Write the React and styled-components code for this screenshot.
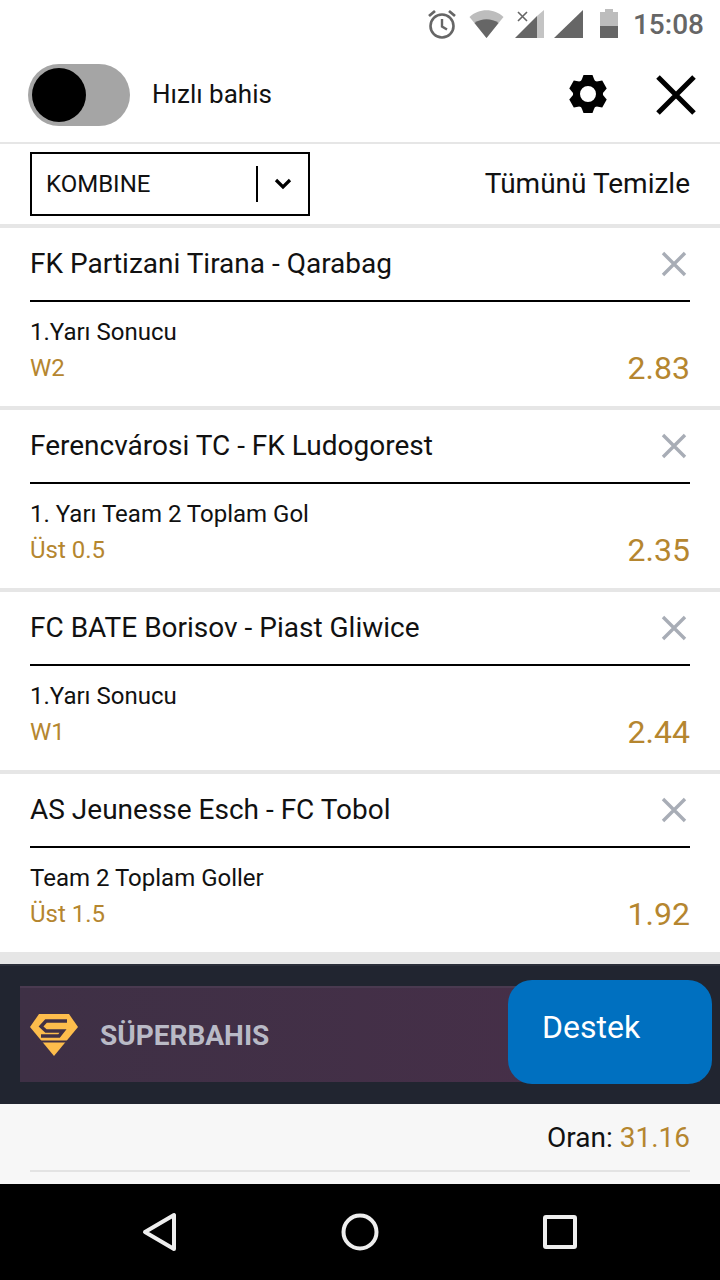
import React from 'react'
import styled, { createGlobalStyle } from 'styled-components'

const GlobalStyle = createGlobalStyle`
  html, body {
    margin: 0;
    padding: 0;
    background: #e6e6e6;
  }
  * {
    box-sizing: border-box;
  }
`

const Page = styled.div`
  position: relative;
  display: flex;
  flex-direction: column;
  width: 720px;
  height: 1280px;
  overflow: hidden;
  font-family: Roboto, 'Liberation Sans', sans-serif;
  color: #111;
`

const StatusBar = styled.div`
  display: flex;
  align-items: center;
  justify-content: flex-end;
  height: 48px;
  padding-right: 16px;
  background: #fff;
  color: #666;
`

const StatusIcon = styled.svg`
  margin-right: ${props => props.$gap}px;
`

const Clock = styled.span`
  font-size: 28px;
  font-weight: 500;
  color: #666;
`

const Header = styled.div`
  display: flex;
  align-items: center;
  height: 96px;
  padding: 0 24px 0 28px;
  background: #fff;
  border-bottom: 2px solid #e6e6e6;
`

const Switch = styled.div`
  display: flex;
  align-items: center;
  width: 102px;
  height: 62px;
  padding-left: 4px;
  border-radius: 31px;
  background: #a5a5a5;
`

const Knob = styled.div`
  width: 54px;
  height: 54px;
  border-radius: 50%;
  background: #000;
`

const SwitchLabel = styled.span`
  flex: 1;
  margin: 0 0 2px 22px;
  font-size: 26px;
`

const Gear = styled.svg`
  margin-bottom: 2px;
`

const CloseButton = styled.svg`
  margin-left: 48px;
`

const Toolbar = styled.div`
  display: flex;
  align-items: center;
  justify-content: space-between;
  height: 80px;
  padding: 0 30px;
  background: #fff;
`

const Select = styled.div`
  display: flex;
  align-items: center;
  width: 280px;
  height: 64px;
  padding-left: 14px;
  border: 2px solid #000;
  font-size: 24px;
`

const SelectValue = styled.span`
  flex: 1;
`

const SelectArrow = styled.div`
  display: flex;
  align-items: center;
  justify-content: center;
  width: 52px;
  height: 36px;
  border-left: 2px solid #000;
`

const ClearAll = styled.span`
  margin-bottom: 2px;
  font-size: 28px;
`

const List = styled.div`
  display: flex;
  flex-direction: column;
  gap: 4px;
  padding-top: 4px;
  background: #e6e6e6;
`

const Card = styled.div`
  height: 178px;
  padding: 0 30px;
  background: #fff;
`

const CardHead = styled.div`
  display: flex;
  align-items: center;
  justify-content: space-between;
  height: 74px;
  padding-bottom: 1px;
  border-bottom: 2px solid #000;
  font-size: 28px;
`

const RemoveIcon = styled.svg`
  width: 26px;
  height: 26px;
  margin-right: 3px;
`

const Market = styled.div`
  margin-top: 15px;
  font-size: 24px;
  line-height: 30px;
`

const Outcome = styled.div`
  display: flex;
  align-items: center;
  justify-content: space-between;
  height: 42px;
  font-size: 24px;
  color: #b5862f;
`

const Odd = styled.span`
  font-size: 32px;
`

const Banner = styled.div`
  height: 140px;
  margin-top: 12px;
  padding: 20px 0 0 20px;
  background: #212530;
  border-top: 2px solid #2b2f3a;
`

const BannerInner = styled.div`
  display: flex;
  align-items: center;
  gap: 22px;
  width: 680px;
  height: 96px;
  padding-left: 10px;
  background: linear-gradient(90deg, #3e3045, #482f49);
  border-top: 2px solid #4a3a50;
`

const BrandName = styled.span`
  font-size: 28px;
  font-weight: 700;
  color: #b9bac6;
`

const Support = styled.div`
  position: absolute;
  left: 508px;
  top: 980px;
  width: 204px;
  height: 104px;
  padding: 28px 0 0 34px;
  border-radius: 24px;
  background: #0070c0;
  color: #fff;
  font-size: 32px;
`

const Summary = styled.div`
  flex: 1;
  padding: 0 30px;
  background: #f7f7f7;
`

const SummaryRow = styled.div`
  display: flex;
  justify-content: flex-end;
  gap: 7px;
  align-items: center;
  height: 68px;
  border-bottom: 2px solid #e3e3e3;
  font-size: 28px;
`

const Total = styled.span`
  color: #b5862f;
`

const NavBar = styled.div`
  display: grid;
  grid-template-columns: repeat(3, 200px);
  justify-content: center;
  align-items: center;
  justify-items: center;
  height: 96px;
  background: #000;
`

const bets = [
  { id: 1, match: 'FK Partizani Tirana - Qarabag', market: '1.Yarı Sonucu', pick: 'W2', odd: '2.83' },
  { id: 2, match: 'Ferencvárosi TC - FK Ludogorest', market: '1. Yarı Team 2 Toplam Gol', pick: 'Üst 0.5', odd: '2.35' },
  { id: 3, match: 'FC BATE Borisov - Piast Gliwice', market: '1.Yarı Sonucu', pick: 'W1', odd: '2.44' },
  { id: 4, match: 'AS Jeunesse Esch - FC Tobol', market: 'Team 2 Toplam Goller', pick: 'Üst 1.5', odd: '1.92' }
]

const App = () => (
  <Page>
    <GlobalStyle />
    <StatusBar>
      <StatusIcon $gap={11} width='32' height='32' viewBox='0 0 32 32' fill='none' stroke='#666'>
        <circle cx='16' cy='18' r='11.5' strokeWidth='2.6' />
        <path d='M16 11v7.5l5 3' strokeWidth='2.4' />
        <path d='M3 8l6-5M29 8l-6-5' strokeWidth='2.8' />
      </StatusIcon>
      <StatusIcon $gap={11} width='35' height='30' viewBox='0 0 34 30'>
        <path d='M0 8C9-1 25-1 34 8L17 29Z' fill='#bdbdbd' />
        <path d='M5 14c7-5 17-5 24 0L17 29Z' fill='#666' />
      </StatusIcon>
      <StatusIcon $gap={9} width='30' height='30' viewBox='0 0 30 30'>
        <path d='M29 1v28h-7V7Z' fill='#c4c4c4' />
        <path d='M0 29L22 7v22Z' fill='#666' />
        <path d='M3 3l9 9M12 3l-9 9' stroke='#666' strokeWidth='1.6' />
      </StatusIcon>
      <StatusIcon $gap={15} width='30' height='30' viewBox='0 0 30 30'>
        <path d='M0 29L29 1v28Z' fill='#666' />
      </StatusIcon>
      <StatusIcon $gap={14} width='20' height='30' viewBox='0 0 20 30'>
        <path d='M6 0h8v3h5v14H1V3h5Z' fill='#bdbdbd' />
        <path d='M1 17h18v12H1Z' fill='#666' />
      </StatusIcon>
      <Clock>15:08</Clock>
    </StatusBar>

    <Header>
      <Switch><Knob /></Switch>
      <SwitchLabel>Hızlı bahis</SwitchLabel>
      <Gear width='40' height='40' viewBox='-20 -20 40 40' fill='none'>
        <circle r='11.5' stroke='#000' strokeWidth='7' />
        {[0, 60, 120, 180, 240, 300].map(angle => (
          <path key={angle} transform={`rotate(${angle})`} d='M-7-12.5L-4.5-19H4.5L7-12.5Z' fill='#000' />
        ))}
      </Gear>
      <CloseButton width='40' height='40' viewBox='0 0 40 40' stroke='#000' strokeWidth='5'>
        <path d='M2 2l36 36M38 2L2 38' />
      </CloseButton>
    </Header>

    <Toolbar>
      <Select>
        <SelectValue>KOMBINE</SelectValue>
        <SelectArrow>
          <svg width='18' height='12' viewBox='0 0 18 12' fill='none' stroke='#000' strokeWidth='3.2'>
            <path d='M2 2l7 7 7-7' />
          </svg>
        </SelectArrow>
      </Select>
      <ClearAll>Tümünü Temizle</ClearAll>
    </Toolbar>

    <List>
      {bets.map(bet => (
        <Card key={bet.id}>
          <CardHead>
            {bet.match}
            <RemoveIcon viewBox='0 0 26 26' stroke='#a8adb6' strokeWidth='3.4'>
              <path d='M2 2l22 22M24 2L2 24' />
            </RemoveIcon>
          </CardHead>
          <Market>{bet.market}</Market>
          <Outcome>
            {bet.pick}
            <Odd>{bet.odd}</Odd>
          </Outcome>
        </Card>
      ))}
    </List>

    <Banner>
      <BannerInner>
        <svg width='48' height='44' viewBox='0 0 48 44'>
          <path d='M9 1H39L48 14 24 43 0 14Z' fill='#fdbd4c' />
          <path d='M37 8H16L11 13.5 16 18H33L29 23H11' fill='none' stroke='#403045' strokeWidth='3.4' />
          <path d='M7 28.5H38' stroke='#403045' strokeWidth='2' />
        </svg>
        <BrandName>SÜPERBAHIS</BrandName>
      </BannerInner>
    </Banner>
    <Support>Destek</Support>

    <Summary>
      <SummaryRow>
        Oran:
        <Total>31.16</Total>
      </SummaryRow>
    </Summary>

    <NavBar>
      <svg width='36' height='40' viewBox='0 0 36 40' fill='none' stroke='#eee' strokeWidth='4' strokeLinejoin='round'>
        <path d='M32 3v34L3 20Z' />
      </svg>
      <svg width='38' height='38' viewBox='0 0 38 38' fill='none' stroke='#eee' strokeWidth='4'>
        <circle cx='19' cy='19' r='16.5' />
      </svg>
      <svg width='34' height='34' viewBox='0 0 34 34' fill='none' stroke='#eee' strokeWidth='4' strokeLinejoin='round'>
        <rect x='2' y='2' width='30' height='30' rx='1' />
      </svg>
    </NavBar>
  </Page>
)

export default App
